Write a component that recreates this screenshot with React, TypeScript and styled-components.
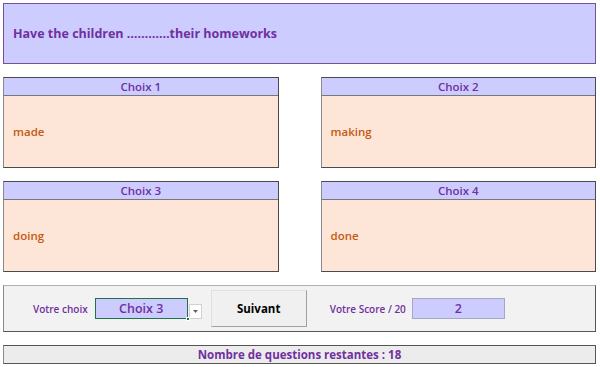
import styled, { createGlobalStyle } from 'styled-components';

const GlobalStyle = createGlobalStyle`
  html, body {
    margin: 0;
    padding: 0;
    background: #ffffff;
  }
  body {
    font-family: 'Open Sans', 'Noto Sans', sans-serif;
  }
`;

const Page = styled.div`
  width: 593px;
  padding: 3px;
  display: flex;
  flex-direction: column;
  gap: 13px;
`;

const Question = styled.div`
  height: 59px;
  background: #ccccff;
  border: 1px solid #7a4f9a;
  display: flex;
  align-items: center;
  padding-left: 9px;
  color: #7030a0;
  font-weight: 700;
  font-size: 12.5px;
`;

const Grid = styled.div`
  display: grid;
  grid-template-columns: 1fr 1fr;
  column-gap: 42px;
  row-gap: 13px;
`;

const Card = styled.div`
  height: 89px;
  border: 1px solid #4a4a4a;
  border-left-color: #8a8a8a;
  display: flex;
  flex-direction: column;
  background: #fde5d8;
`;

const CardTitle = styled.div`
  height: 17px;
  background: #ccccff;
  border-bottom: 1px solid #777777;
  color: #7030a0;
  font-size: 11.5px;
  font-weight: 600;
  display: flex;
  align-items: center;
  justify-content: center;
`;

const CardBody = styled.div`
  flex: 1;
  display: flex;
  align-items: center;
  padding-left: 9px;
  color: #c55a11;
  font-size: 11.5px;
  font-weight: 600;
`;

const Panel = styled.div`
  height: 45px;
  background: #f2f2f2;
  border: 1px solid #555555;
  border-top-color: #b0b0b0;
  border-left-color: #8a8a8a;
  display: flex;
  align-items: center;
  padding-left: 29px;
`;

const Label = styled.span<{ $gap: number }>`
  color: #7030a0;
  font-size: 10px;
  font-weight: 600;
  margin-right: ${(p) => p.$gap}px;
`;

const ValueBox = styled.div<{ $selected?: boolean }>`
  width: 91px;
  height: 19px;
  background: #ccccff;
  border: 1px solid ${(p) => (p.$selected ? '#217346' : '#a6a6c8')};
  color: #7030a0;
  font-size: 12.5px;
  font-weight: 600;
  display: flex;
  align-items: center;
  justify-content: center;
  position: relative;
`;

const Handle = styled.span`
  position: absolute;
  right: -3px;
  bottom: -3px;
  width: 4px;
  height: 4px;
  background: #217346;
  border: 1px solid #ffffff;
  box-sizing: border-box;
`;

const DropArrow = styled.div`
  width: 11px;
  height: 13px;
  margin-top: 6px;
  margin-left: 1px;
  background: #ffffff;
  border: 1px solid #d0d0d0;
  display: flex;
  align-items: center;
  justify-content: center;
`;

const NextButton = styled.div`
  width: 94px;
  height: 35px;
  margin-left: 9px;
  margin-right: 23px;
  background: #f0f0f0;
  border: 1px solid #e0e0e0;
  border-right-color: #a0a0a0;
  border-bottom-color: #a0a0a0;
  display: flex;
  align-items: center;
  justify-content: center;
  color: #000000;
  font-size: 11.5px;
  font-weight: 700;
`;

const Footer = styled.div`
  height: 17px;
  background: #ececec;
  border: 1px solid #555555;
  border-left-color: #8a8a8a;
  display: flex;
  align-items: center;
  justify-content: center;
  color: #7030a0;
  font-size: 11.5px;
  font-weight: 700;
`;

const choices = [
  { title: 'Choix 1', answer: 'made' },
  { title: 'Choix 2', answer: 'making' },
  { title: 'Choix 3', answer: 'doing' },
  { title: 'Choix 4', answer: 'done' },
];

export default function App() {
  return (
    <>
      <GlobalStyle />
      <Page>
        <Question>Have the children …………their homeworks</Question>
        <Grid>
          {choices.map((c) => (
            <Card key={c.title}>
              <CardTitle>{c.title}</CardTitle>
              <CardBody>{c.answer}</CardBody>
            </Card>
          ))}
        </Grid>
        <Panel>
          <Label $gap={7}>Votre choix</Label>
          <ValueBox $selected>
            Choix 3
            <Handle />
          </ValueBox>
          <DropArrow>
            <svg width="5" height="3" viewBox="0 0 5 3">
              <path d="M0 0 L5 0 L2.5 3 Z" fill="#606060" />
            </svg>
          </DropArrow>
          <NextButton>Suivant</NextButton>
          <Label $gap={6}>Votre Score / 20</Label>
          <ValueBox>2</ValueBox>
        </Panel>
        <Footer>Nombre de questions restantes : 18</Footer>
      </Page>
    </>
  );
}
